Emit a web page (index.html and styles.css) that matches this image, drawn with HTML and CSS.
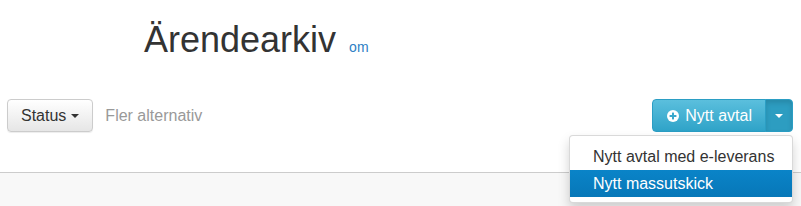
FILE: index.html
```html
<!DOCTYPE html>
<html lang="sv">
<head>
<meta charset="utf-8">
<title>Ärendearkiv</title>
<link rel="stylesheet" href="styles.css">
</head>
<body>
<div class="page">
  <header class="page-header">
    <h1 class="title">Ärendearkiv <a class="title-link" href="#">om</a></h1>
  </header>
  <div class="toolbar">
    <div class="toolbar-left">
      <button class="btn btn-default" type="button">Status <span class="caret"></span></button>
      <span class="muted">Fler alternativ</span>
    </div>
    <div class="btn-group">
      <button class="btn btn-info btn-main" type="button">
        <svg class="icon-plus" viewBox="0 0 12 12" width="12" height="12" aria-hidden="true">
          <circle cx="6" cy="6" r="6" fill="#fff"/>
          <rect x="5" y="2.6" width="2" height="6.8" fill="#3aa8cc"/>
          <rect x="2.6" y="5" width="6.8" height="2" fill="#3aa8cc"/>
        </svg>
        Nytt avtal
      </button>
      <button class="btn btn-info btn-toggle" type="button"><span class="caret caret-white"></span></button>
      <ul class="dropdown-menu">
        <li><a href="#">Nytt avtal med e-leverans</a></li>
        <li class="active"><a href="#">Nytt massutskick</a></li>
      </ul>
    </div>
  </div>
  <div class="content-area"></div>
</div>
</body>
</html>
```

FILE: styles.css
```css
html, body {
  margin: 0;
  padding: 0;
  height: 100%;
}
body {
  font-family: "Liberation Sans", Arial, sans-serif;
  font-size: 16px;
  color: #333;
  background: #fff;
}
.page {
  display: flex;
  flex-direction: column;
  min-height: 100%;
}
.page-header {
  padding-left: 144px;
}
.title {
  margin: 20px 0 0;
  font-size: 36px;
  font-weight: normal;
  line-height: 40px;
  color: #333;
}
.title-link {
  font-size: 14px;
  color: #2d7fc4;
  text-decoration: none;
  margin-left: 3px;
}
.toolbar {
  display: flex;
  justify-content: space-between;
  align-items: center;
  padding: 0 8px 0 7px;
  margin-top: 32px;
}
.toolbar-left {
  display: flex;
  align-items: center;
  gap: 12px;
}
.muted {
  color: #999;
}
.btn {
  font-family: inherit;
  font-size: 16px;
  line-height: 19px;
  padding: 6px 12px;
  border: 1px solid transparent;
  border-radius: 4px;
  cursor: pointer;
  display: inline-flex;
  align-items: center;
}
.btn-default {
  color: #333;
  background: linear-gradient(to bottom, #fff 0, #e6e6e6 100%);
  border-color: #ccc;
  box-shadow: 0 1px 1px rgba(0,0,0,.075);
  padding: 6px 13px;
}
.caret {
  display: inline-block;
  width: 0;
  height: 0;
  margin-left: 5px;
  border-top: 4px solid #333;
  border-left: 4px solid transparent;
  border-right: 4px solid transparent;
}
.caret-white {
  border-top-color: #fff;
  margin-left: 0;
}
.btn-group {
  position: relative;
  display: flex;
}
.btn-info {
  color: #fff;
  background: linear-gradient(to bottom, #5bbfdd 0, #2fa3c8 100%);
  border-color: #2b9ec4;
}
.btn-main {
  border-top-right-radius: 0;
  border-bottom-right-radius: 0;
  padding: 6px 13px 6px 14px;
  gap: 6px;
}
.btn-toggle {
  border-top-left-radius: 0;
  border-bottom-left-radius: 0;
  margin-left: -1px;
  padding: 6px 9px;
  height: 33px;
  background: #2d9dc1;
  box-shadow: inset 0 3px 5px rgba(0,0,0,.125);
}
.dropdown-menu {
  position: absolute;
  top: 100%;
  right: 0;
  margin: 3px 0 0;
  padding: 7px 0 5px;
  list-style: none;
  background: #fff;
  border: 1px solid rgba(0,0,0,.15);
  border-radius: 4px;
  box-shadow: 0 6px 12px rgba(0,0,0,.175);
  width: 222px;
  z-index: 10;
}
.dropdown-menu a {
  display: block;
  padding: 3px 10px 3px 23px;
  line-height: 21px;
  color: #333;
  text-decoration: none;
  white-space: nowrap;
}
.dropdown-menu .active a {
  color: #fff;
  background: linear-gradient(to bottom, #0a84c8 0, #0777b8 100%);
}
.content-area {
  flex: 1;
  margin-top: 40px;
  border-top: 1px solid #ccc;
  background: #f8f8f8;
}
```
